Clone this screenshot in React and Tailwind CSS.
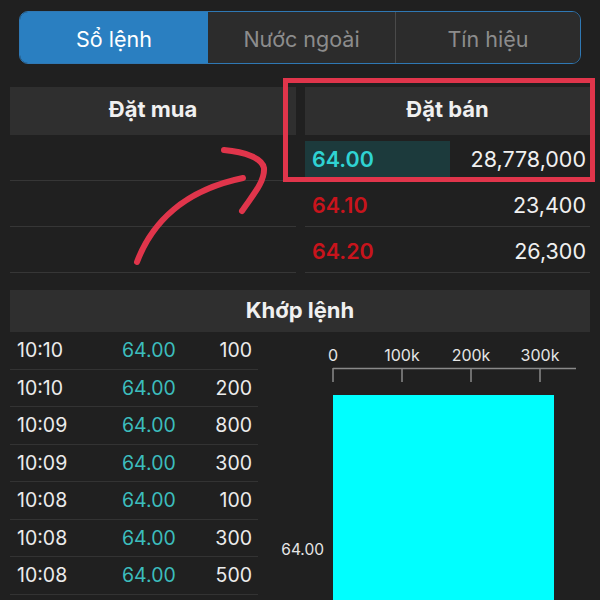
import React from "react";

const sellRows = [
  { price: "64.10", vol: "23,400" },
  { price: "64.20", vol: "26,300" },
];

const trades = [
  ["10:10", "64.00", "100"],
  ["10:10", "64.00", "200"],
  ["10:09", "64.00", "800"],
  ["10:09", "64.00", "300"],
  ["10:08", "64.00", "100"],
  ["10:08", "64.00", "300"],
  ["10:08", "64.00", "500"],
];

const Chart = () => (
  <svg width="330" height="268" className="block">
    <text x="63" y="29" fill="#e6e6e6" fontSize="16" textAnchor="middle">0</text>
    <text x="132" y="29" fill="#e6e6e6" fontSize="16" textAnchor="middle">100k</text>
    <text x="201" y="29" fill="#e6e6e6" fontSize="16" textAnchor="middle">200k</text>
    <text x="270" y="29" fill="#e6e6e6" fontSize="16" textAnchor="middle">300k</text>
    <line x1="63" y1="36.5" x2="306" y2="36.5" stroke="#8a8a8a" strokeWidth="1.5" />
    {[63, 132, 201, 270].map((x) => (
      <line key={x} x1={x} y1="36" x2={x} y2="50" stroke="#8a8a8a" strokeWidth="1.5" />
    ))}
    <rect x="63" y="63" width="221" height="220" fill="#00ffff" />
    <text x="54" y="223" fill="#e6e6e6" fontSize="15.5" textAnchor="end">64.00</text>
  </svg>
);

export default function App() {
  return (
    <div className="relative w-[600px] h-[600px] overflow-hidden bg-[#202020] text-[#f0f0f0] font-['Inter','Liberation_Sans',sans-serif]">
      {/* tabs */}
      <div className="mt-[11px] mx-[19px] h-[53px] flex rounded-[9px] overflow-hidden border border-[#2f78b4] text-[21.5px]">
        <div className="w-[188px] bg-[#2a7fc1] flex items-center justify-center pt-[3px] text-white">Sổ lệnh</div>
        <div className="w-[188px] bg-[#2c2c2c] border-r border-[#4a4a4a] flex items-center justify-center pt-[3px] text-[#8c8c8c]">Nước ngoài</div>
        <div className="flex-1 bg-[#2c2c2c] flex items-center justify-center pt-[3px] text-[#8c8c8c]">Tín hiệu</div>
      </div>

      {/* order book */}
      <div className="mt-[23px] px-[10px] flex gap-[9px]">
        <div className="w-[286px]">
          <div className="h-[48px] bg-[#2f2f2f] flex items-center justify-center pb-[3px] font-bold text-[22px]">Đặt mua</div>
          {[0, 1, 2].map((i) => (
            <div key={i} className="h-[46px] border-b border-[#363636]" />
          ))}
        </div>
        <div className="flex-1">
          <div className="h-[48px] bg-[#2f2f2f] flex items-center justify-center pb-[3px] font-bold text-[22px]">Đặt bán</div>
          <div className="h-[46px] border-b border-[#363636] flex items-center justify-between text-[21.5px]">
            <div className="w-[145px] h-[36px] mt-[2px] bg-[#1c3a3c] flex items-center pl-[7px] pt-[2px] font-semibold text-[#2fd3d3]">64.00</div>
            <span className="pr-[4px] pt-[4px]">28,778,000</span>
          </div>
          {sellRows.map((r) => (
            <div key={r.price} className="h-[46px] border-b border-[#363636] flex items-center justify-between pt-[3px] text-[21.5px]">
              <span className="pl-[7px] font-semibold text-[#c8141c]">{r.price}</span>
              <span className="pr-[4px]">{r.vol}</span>
            </div>
          ))}
        </div>
      </div>

      {/* matched orders */}
      <div className="mt-[17px] mx-[10px] h-[42px] bg-[#2f2f2f] flex items-center justify-center pb-[2px] font-bold text-[22px]">Khớp lệnh</div>
      <div className="flex">
        <div className="ml-[10px] w-[248px]">
          {trades.map((t, i) => (
            <div key={i} className="h-[37.5px] border-b border-[#333] flex items-center pt-[1px] text-[19.5px]">
              <span className="w-[112px] pl-[7px] text-[#ececec]">{t[0]}</span>
              <span className="w-[60px] text-[#3cbdbd]">{t[1]}</span>
              <span className="flex-1 text-right pr-[6px] text-[#ececec]">{t[2]}</span>
            </div>
          ))}
        </div>
        <div className="ml-[12px]">
          <Chart />
        </div>
      </div>

      {/* annotation */}
      <div className="absolute left-[283px] top-[78px] w-[312px] h-[104px] border-[5px] border-[#e0354b]" />
      <svg className="absolute left-0 top-0" width="600" height="600" fill="none">
        <path d="M137 262 C 152 222, 185 190, 243 178" stroke="#e0354b" strokeWidth="6" strokeLinecap="round" />
        <path d="M224 150 C 245 152, 262 158, 264 168 C 265 182, 252 196, 242 211" stroke="#e0354b" strokeWidth="6" strokeLinecap="round" />
      </svg>
    </div>
  );
}
